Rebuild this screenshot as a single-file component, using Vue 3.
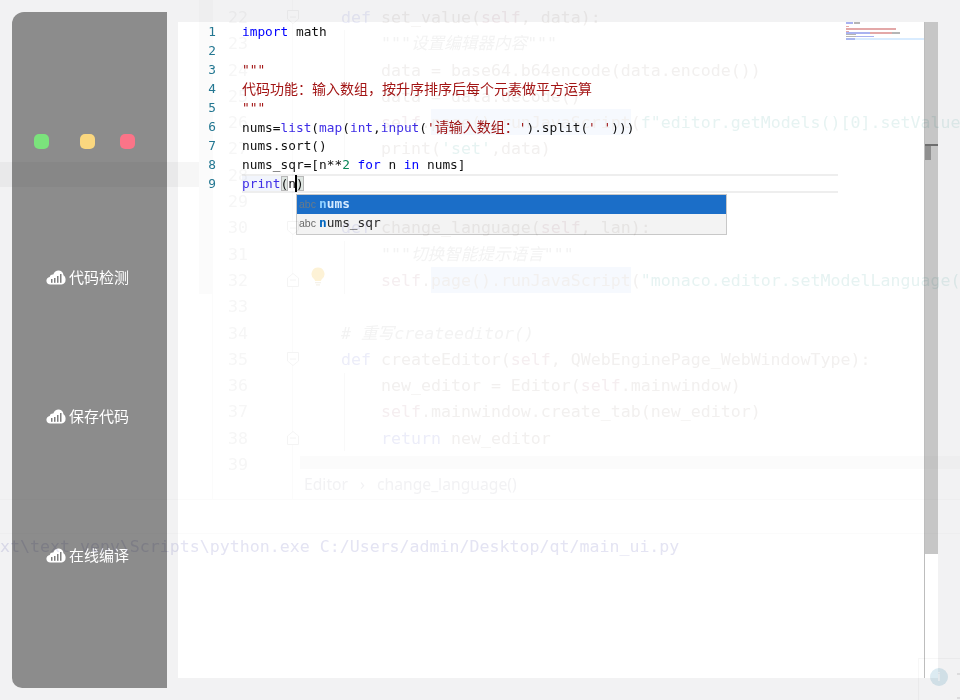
<script setup>
const ghost = [
  { n: 22, html: '<i class="k">def</i> set_value(<i class="s">self</i>, data):', ind: 1 },
  { n: 23, html: '<em>"""设置编辑器内容"""</em>', ind: 2 },
  { n: 24, html: 'data = base64.b64encode(data.encode())', ind: 2 },
  { n: 25, html: 'data = data.decode()', ind: 2 },
  { n: 26, html: '<i class="s">self</i>.page().runJavaScript(<i class="g">f"editor.getModels()[0].setValue</i>', ind: 2 },
  { n: 27, html: 'print(<i class="g">\'set\'</i>,data)', ind: 2 },
  { n: 28, html: '', ind: 0 },
  { n: 29, html: '', ind: 0 },
  { n: 30, html: '<i class="k">def</i> change_language(<i class="s">self</i>, lan):', ind: 1 },
  { n: 31, html: '<em>"""切换智能提示语言"""</em>', ind: 2 },
  { n: 32, html: '<i class="s">self</i>.page().runJavaScript(<i class="g">"monaco.editor.setModelLanguage(</i>', ind: 2 },
  { n: 33, html: '', ind: 0 },
  { n: 34, html: '<em># 重写createeditor()</em>', ind: 1 },
  { n: 35, html: '<i class="k">def</i> createEditor(<i class="s">self</i>, QWebEnginePage_WebWindowType):', ind: 1 },
  { n: 36, html: 'new_editor = Editor(<i class="s">self</i>.mainwindow)', ind: 2 },
  { n: 37, html: '<i class="s">self</i>.mainwindow.create_tab(new_editor)', ind: 2 },
  { n: 38, html: '<i class="k">return</i> new_editor', ind: 2 },
  { n: 39, html: '', ind: 0 },
]
const nav = ['代码检测', '保存代码', '在线编译']
const lineNos = [1, 2, 3, 4, 5, 6, 7, 8, 9]
const folds = [
  [17, false], [228, false], [280, true], [359, false], [438, true],
]
const mini = [
  [846, 22, 7, 2, '#a9b2f0'], [854, 22, 6, 2, '#b5b5b5'],
  [846, 26, 3, 1, '#e6a9a9'], [846, 28, 50, 2, '#e3a8a8'], [846, 31, 3, 1, '#e6a9a9'],
  [846, 32, 24, 2, '#a9b2f0'], [870, 32, 22, 2, '#e3a8a8'], [892, 32, 8, 2, '#b5b5b5'],
  [846, 34, 10, 1, '#b5b5b5'], [846, 36, 10, 1, '#b5b5b5'], [856, 36, 18, 1, '#a9b2f0'],
  [846, 38, 78, 2, '#d9ecff'], [846, 38, 9, 2, '#a9b6ee'],
]
</script>

<template>
  <div class="page">
    <div class="shell">
      <aside class="side">
        <div class="dots">
          <span class="dot green"></span>
          <span class="dot yellow"></span>
          <span class="dot red"></span>
        </div>
        <div v-for="item in nav" :key="item" class="nav-item">
          <svg class="cloud" width="20" height="16" viewBox="0 0 20 16">
            <path fill="#fff" d="M4.500 15.500C2 15.500.400 13.800.400 11.700c0-2 1.400-3.500 3.300-3.800C4.300 6.100 5.700 5.300 7.300 5.500 8.300 2.800 10.600 1.200 13 1.500c2.600.3 4.300 2.300 4.500 4.800 1.300.8 2.100 2.500 2.100 4.500 0 2.700-1.600 4.700-4 4.700Z"/>
            <g fill="#7d7d7d">
              <rect x="5" y="10" width="1.500" height="3.800"/>
              <rect x="8" y="9" width="1.500" height="4.800"/>
              <rect x="11" y="7" width="1.500" height="6.800"/>
              <rect x="14" y="5" width="1.500" height="8.800"/>
            </g>
          </svg>
          <span>{{ item }}</span>
        </div>
      </aside>

      <main class="editor">
        <div class="gutter">
          <div v-for="n in lineNos" :key="n" class="no">{{ n }}</div>
        </div>
        <div class="code">
          <div class="ln"><b class="kw">import</b> math</div>
          <div class="ln"></div>
          <div class="ln str">"""</div>
          <div class="ln str"><span class="cjk">代码功能：输入数组，按升序排序后每个元素做平方运算</span></div>
          <div class="ln str">"""</div>
          <div class="ln">nums=<b class="fn">list</b>(<b class="fn">map</b>(<b class="fn">int</b>,<b class="fn">input</b>(<span class="str">'<span class="cjk">请输入数组：</span>'</span>).split(<span class="str">' '</span>)))</div>
          <div class="ln">nums.sort()</div>
          <div class="ln">nums_sqr=[n**<b class="num">2</b> <b class="kw">for</b> n <b class="kw">in</b> nums]</div>
          <div class="ln active"><b class="fn sel">print</b><span class="br">(</span>n<span class="br close">)</span></div>

          <div class="suggest">
            <div class="row on"><span class="abc">abc</span><span class="opt"><b class="hl">n</b>ums</span></div>
            <div class="row"><span class="abc">abc</span><span class="opt"><b class="hl">n</b>ums_sqr</span></div>
          </div>
        </div>
        <svg class="minimap" width="78" height="20" viewBox="846 22 78 20">
          <rect v-for="(m, i) in mini" :key="i" :x="m[0]" :y="m[1]" :width="m[2]" :height="m[3]" :fill="m[4]"/>
        </svg>
        <div class="scroll">
          <div class="track">
            <div class="mark"></div>
            <div class="thumb"></div>
          </div>
        </div>
      </main>
    </div>

    <div class="ghost">
      <div class="g-strip"></div>
      <div class="g-band"></div>
      <div class="g-vline v1"></div>
      <div class="g-vline v2"></div>
      <div class="g-guide a"></div>
      <div class="g-guide b"></div>
      <div class="g-guide c"></div>
      <div class="g-hline h1"></div>
      <div class="g-hline h2"></div>
      <div class="g-hl hl26"></div>
      <div class="g-hl hl32"></div>
      <div class="g-line39"></div>
      <svg
        v-for="f in folds"
        :key="f[0]"
        class="g-fold"
        :style="{ top: f[0] - 8 + 'px' }"
        width="14"
        height="16"
        viewBox="0 0 14 16"
      >
        <path v-if="f[1]" fill="#fff" stroke="#f4f4f4" d="M1.500 14.500V6L7 1.500 12.500 6v8.500Z"/>
        <path v-else fill="#fff" stroke="#f4f4f4" d="M1.500 1.500h11V10L7 14.500 1.500 10Z"/>
        <path stroke="#f4f4f4" d="M4 8h6"/>
      </svg>
      <svg class="g-bulb" width="14" height="20" viewBox="0 0 14 20">
        <path fill="#fdf2d6" d="M7 .500a6.500 6.500 0 0 1 4 11.600c-.7.6-1 1.200-1 1.900H4c0-.7-.3-1.300-1-1.900A6.500 6.500 0 0 1 7 .500Z"/>
        <path fill="#f5f2ea" d="M4 15h6v1.200H4ZM5 17.300h4v1.200H5Z"/>
      </svg>
      <div class="g-code">
        <div v-for="l in ghost" :key="l.n" class="g-row">
          <span class="g-no">{{ l.n }}</span>
          <span :class="['g-text', 'ind' + l.ind]" v-html="l.html"></span>
        </div>
      </div>
      <div class="g-crumb"><span>Editor</span><span>›</span><span>change_language()</span></div>
      <div class="g-term">xt\text_venv\Scripts\python.exe C:/Users/admin/Desktop/qt/main_ui.py</div>
      <div class="g-toast"><span class="g-info">i</span><span class="g-dash d1"></span><span class="g-dash d2"></span></div>
    </div>
  </div>
</template>

<style scoped>
.page {
  position: relative;
  width: 960px;
  height: 700px;
  overflow: hidden;
  background: #f2f2f3;
}
.ghost {
  position: absolute;
  inset: 0;
  overflow: hidden;
  pointer-events: none;
  mix-blend-mode: multiply;
  font-family: "DejaVu Sans Mono", "Noto Sans CJK SC", monospace;
  color: #f2f0ef;
}
.g-strip {
  position: absolute;
  left: 199px;
  top: 0;
  width: 13px;
  height: 294px;
  background: #fbfbfb;
}
.g-band {
  position: absolute;
  left: 0;
  top: 162px;
  width: 199px;
  height: 25px;
  background: #f6f6f6;
}
.g-vline {
  position: absolute;
  top: 0;
  width: 1px;
  height: 499px;
  background: #fbfbfb;
}
.v1 { left: 212px; }
.v2 { left: 292px; }
.g-guide {
  position: absolute;
  left: 344px;
  width: 1px;
  background: #f9f9f9;
}
.g-guide.a { top: 30px; height: 131px; }
.g-guide.b { top: 241px; height: 53px; }
.g-guide.c { top: 373px; height: 78px; }
.g-hline {
  position: absolute;
  left: 0;
  right: 0;
  height: 1px;
  background: #fbfbfb;
}
.h1 { top: 499px; }
.h2 { top: 533px; }
.g-hl {
  position: absolute;
  left: 431px;
  width: 200px;
  height: 26px;
  background: #f6f9fe;
}
.hl26 { top: 109px; }
.hl32 { top: 267px; }
.g-line39 {
  position: absolute;
  left: 300px;
  right: 0;
  top: 456px;
  height: 13px;
  background: #fbfbfb;
}
.g-fold {
  position: absolute;
  left: 286px;
}
.g-bulb {
  position: absolute;
  left: 311px;
  top: 267px;
}
.g-code {
  position: absolute;
  left: 0;
  top: 5px;
}
.g-row {
  display: flex;
  height: 26.300px;
  line-height: 26.300px;
  font-size: 16.600px;
  white-space: nowrap;
}
.g-no {
  width: 248px;
  padding-left: 228px;
  color: #f6f6f6;
  box-sizing: border-box;
}
.g-text.ind1 { margin-left: 93px; }
.g-text.ind2 { margin-left: 133px; }
.g-text :deep(i) { font-style: normal; }
.g-text :deep(.k) { color: #ecedf9; }
.g-text :deep(.s) { color: #f5eef0; }
.g-text :deep(.g) { color: #e6f3f2; }
.g-text :deep(em) { color: #f3f3f3; }
.g-crumb {
  position: absolute;
  left: 304px;
  top: 473px;
  display: flex;
  gap: 12px;
  font-family: "Noto Sans", sans-serif;
  font-size: 15.700px;
  color: #f2f2f4;
}
.g-term {
  position: absolute;
  left: 0;
  top: 537px;
  font-size: 16.600px;
  white-space: nowrap;
  color: #e4e4f3;
}
.g-toast {
  position: absolute;
  left: 918px;
  top: 658px;
  width: 60px;
  height: 60px;
  border: 1px solid #f7f7f7;
  box-sizing: border-box;
}
.g-info {
  position: absolute;
  left: 11px;
  top: 9px;
  width: 18px;
  height: 18px;
  border-radius: 50%;
  background: #dcebf2;
  color: #f2f7fa;
  font-family: "Liberation Sans", sans-serif;
  font-weight: 700;
  font-size: 12px;
  line-height: 18px;
  text-align: center;
}
.g-dash {
  position: absolute;
  left: 38px;
  width: 6px;
  height: 2px;
  background: #e8e8e8;
}
.d1 { top: 14px; }
.d2 { top: 38px; }

.shell {
  display: flex;
  gap: 11px;
  padding: 12px 22px 12px 12px;
}
.side {
  width: 155px;
  height: 676px;
  flex: none;
  box-sizing: border-box;
  background: #8c8c8c;
  border-radius: 12px 0 0 10px;
  display: flex;
  flex-direction: column;
  padding-top: 122px;
}
.dots {
  display: flex;
  height: 15px;
  padding-left: 22px;
  margin-bottom: 58px;
}
.dot {
  width: 15px;
  height: 15px;
  border-radius: 5px;
}
.green { background: #7be37c; margin-right: 31px; }
.yellow { background: #fad77f; margin-right: 25px; }
.red { background: #fb7488; }
.nav-item {
  height: 139px;
  flex: none;
  display: flex;
  align-items: center;
  justify-content: center;
  gap: 3px;
  padding-right: 4px;
  color: #fff;
  font-family: "Noto Sans CJK SC", sans-serif;
  font-size: 15px;
}
.editor {
  position: relative;
  width: 760px;
  height: 656px;
  margin-top: 10px;
  background: #fff;
  display: flex;
  font-family: "DejaVu Sans Mono", "Noto Sans CJK SC", monospace;
  font-size: 12.800px;
}
.gutter {
  width: 64px;
  flex: none;
  text-align: right;
  padding-right: 26px;
  box-sizing: border-box;
  color: #237893;
}
.no { height: 19px; line-height: 19px; }
.code {
  position: relative;
  flex: 1;
  white-space: pre;
  color: #111;
}
.ln { height: 19px; line-height: 19px; }
.kw, .fn, .num { font-weight: 400; }
.kw { color: #0000ff; }
.fn { color: #3f2ee6; }
.num { color: #098658; }
.str { color: #a31515; }
.cjk { font-family: "Noto Sans CJK SC", sans-serif; font-size: 14px; }
.active {
  box-sizing: border-box;
  width: 596px;
  border-top: 2px solid #eeeeee;
  border-bottom: 2px solid #eeeeee;
  line-height: 15px;
}
.sel { background: #f2f5fc; }
.br {
  position: relative;
  display: inline-block;
  height: 15px;
  background: #dfe6e2;
  box-shadow: inset 0 0 0 1px #b9b9b9;
}
.close::before {
  content: "";
  position: absolute;
  left: -1px;
  top: -1px;
  width: 2px;
  height: 17px;
  background: #000;
}
.suggest {
  position: absolute;
  left: 54px;
  top: 172px;
  width: 431px;
  height: 41px;
  box-sizing: border-box;
  border: 1px solid #c8c8c8;
  background: #f3f3f3;
}
.row {
  height: 19px;
  line-height: 18px;
  display: flex;
  padding-left: 2px;
  color: #2b2b2b;
}
.row.on { background: #1b6ec8; color: #d6ebff; font-weight: 700; }
.row.on .abc { color: #6b7a86; font-weight: 400; }
.abc {
  width: 20px;
  flex: none;
  font-family: "Liberation Sans", sans-serif;
  font-size: 10.500px;
  color: #6a6a6a;
}
.hl { color: #0066bf; font-weight: 700; }
.row.on .hl { color: #8fd0ff; }
.minimap {
  position: absolute;
  left: 668px;
  top: 0;
}
.scroll {
  position: absolute;
  right: 0;
  top: 0;
  width: 14px;
  height: 656px;
  box-sizing: border-box;
  border-left: 1px solid #bdbdbd;
}
.track {
  position: relative;
  height: 532px;
  background: #c6c6c6;
}
.mark {
  position: absolute;
  left: 0;
  right: 0;
  top: 122px;
  height: 2px;
  background: #6e6e6e;
}
.thumb {
  position: absolute;
  left: 0;
  top: 124px;
  width: 6px;
  height: 14px;
  background: #909090;
}
</style>
